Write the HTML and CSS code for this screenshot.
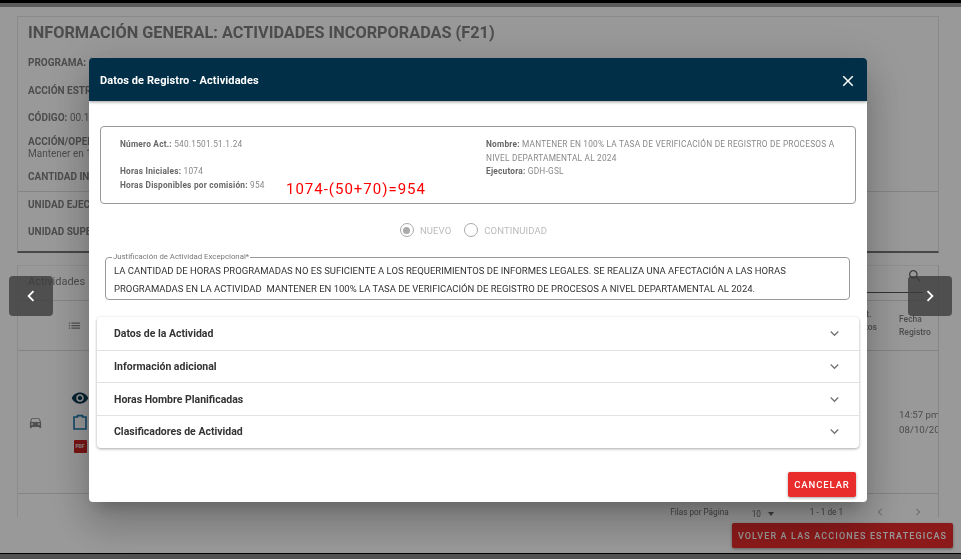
FILE: index.html
```html
<!DOCTYPE html>
<html>
<head>
    <title>Actividades</title>
    <meta charset="UTF-8">
    <meta name="viewport" content="width=device-width, initial-scale=1.0">
    <link rel="stylesheet" href="styles.css">
</head>
<body>
    <div class="barra-top"></div>

    <main class="contenido">
        <section class="card-info">
            <h1>INFORMACIÓN GENERAL: ACTIVIDADES INCORPORADAS (F21)</h1>
            <div class="info-campos">
                <p>PROGRAMA: (</p>
                <p>ACCIÓN ESTRATÉGICA:</p>
                <p>CÓDIGO: <span>00.15</span></p>
            </div>
            <p class="info-accion">ACCIÓN/OPERACIÓN:<span>Mantener en 100%</span></p>
            <p class="info-cantidad">CANTIDAD INICIAL:</p>
            <div class="info-unidades">
                <p>UNIDAD EJECUTORA:</p>
                <p>UNIDAD SUPERIOR:</p>
            </div>
        </section>

        <section class="card-tabla">
            <div class="tabla-top">
                <span>Actividades</span>
                <div class="buscador">
                    <svg viewBox="0 0 24 24" class="ico-buscar"><path d="M15.5 14h-.79l-.28-.27A6.47 6.47 0 0 0 16 9.5 6.5 6.5 0 1 0 9.5 16c1.61 0 3.09-.59 4.23-1.57l.27.28v.79l5 4.99L20.49 19l-4.99-5zm-6 0C7.01 14 5 11.99 5 9.5S7.01 5 9.5 5 14 7.01 14 9.5 11.99 14 9.5 14z"/></svg>
                </div>
            </div>
            <div class="tabla-head">
                <svg viewBox="0 0 24 24" class="ico-lista"><path d="M3 13h2v-2H3v2zm0 4h2v-2H3v2zm0-8h2V7H3v2zm4 4h14v-2H7v2zm0 4h14v-2H7v2zM7 7v2h14V7H7z"/></svg>
                <span class="col-min">Cant.<br>Minutos</span>
                <span class="col-fecha">Fecha<br>Registro</span>
            </div>
            <div class="tabla-fila">
                <svg viewBox="0 0 24 24" class="ico-auto"><path d="M18.92 6.01C18.72 5.42 18.16 5 17.5 5h-11c-.66 0-1.21.42-1.42 1.01L3 12v8c0 .55.45 1 1 1h1c.55 0 1-.45 1-1v-1h12v1c0 .55.45 1 1 1h1c.55 0 1-.45 1-1v-8l-2.08-5.99zM6.5 16c-.83 0-1.5-.67-1.5-1.5S5.67 13 6.5 13s1.5.67 1.5 1.5S7.33 16 6.5 16zm11 0c-.83 0-1.5-.67-1.5-1.5s.67-1.5 1.5-1.5 1.5.67 1.5 1.5-.67 1.5-1.5 1.5zM5 11l1.5-4.5h11L19 11H5z"/></svg>
                <div class="acciones">
                    <svg viewBox="0 0 24 24" class="ico-ojo"><path d="M12 4.5C7 4.5 2.73 7.61 1 12c1.73 4.39 6 7.5 11 7.5s9.27-3.11 11-7.5c-1.73-4.39-6-7.5-11-7.5zM12 17c-2.76 0-5-2.24-5-5s2.24-5 5-5 5 2.24 5 5-2.24 5-5 5zm0-8c-1.66 0-3 1.34-3 3s1.34 3 3 3 3-1.34 3-3-1.34-3-3-3z"/></svg>
                    <svg viewBox="0 0 14 16" class="ico-clip"><path d="M1 3h3.5V1.6h5V3H13v12H1z"/></svg>
                    <span class="ico-pdf">PDF</span>
                </div>
                <span class="col-fecha fecha-dato">14:57 pm<br>08/10/20</span>
            </div>
            <div class="tabla-pie">
                <span>Filas por Página</span>
                <span class="pie-filas">10<i class="flecha-abajo"></i></span>
                <span class="pie-rango">1 - 1 de 1</span>
                <svg viewBox="0 0 24 24" class="ico-pag"><path d="M15.4 7.4 14 6l-6 6 6 6 1.4-1.4L10.8 12z"/></svg>
                <svg viewBox="0 0 24 24" class="ico-pag"><path d="M8.6 7.4 10 6l6 6-6 6-1.4-1.4 4.6-4.6z"/></svg>
            </div>
        </section>

        <div class="volver-fila">
            <button class="btn-volver">VOLVER A LAS ACCIONES ESTRATEGICAS</button>
        </div>
    </main>

    <div class="barra-bottom"></div>

    <!-- Ventana modal -->
    <div class="fondo-modal">
        <div class="modal">
            <header class="modal-head">
                <h2>Datos de Registro - Actividades</h2>
                <svg viewBox="0 0 24 24" class="ico-cerrar"><path d="M19 6.41 17.59 5 12 10.59 6.41 5 5 6.41 10.59 12 5 17.59 6.41 19 12 13.41 17.59 19 19 17.59 13.41 12z"/></svg>
            </header>

            <div class="modal-body">
                <div class="resumen">
                    <div class="resumen-col">
                        <p><b>Número Act.:</b> 540.1501.51.1.24</p>
                        <p>&nbsp;</p>
                        <p><b>Horas Iniciales:</b> 1074</p>
                        <p><b>Horas Disponibles por comisión:</b> 954</p>
                    </div>
                    <div class="resumen-col">
                        <p><b>Nombre:</b> MANTENER EN 100% LA TASA DE VERIFICACIÓN DE REGISTRO DE PROCESOS A NIVEL DEPARTAMENTAL AL 2024</p>
                        <p><b>Ejecutora:</b> GDH-GSL</p>
                    </div>
                    <span class="nota-roja">1074-(50+70)=954</span>
                </div>

                <div class="radios">
                    <span class="radio radio-activo"></span><span>NUEVO</span>
                    <span class="radio"></span><span>CONTINUIDAD</span>
                </div>

                <fieldset class="justificacion">
                    <legend>Justificación de Actividad Excepcional*</legend>
                    <p>LA CANTIDAD DE HORAS PROGRAMADAS NO ES SUFICIENTE A LOS REQUERIMIENTOS DE INFORMES LEGALES. SE REALIZA UNA AFECTACIÓN A LAS HORAS PROGRAMADAS EN LA ACTIVIDAD&nbsp; MANTENER EN 100% LA TASA DE VERIFICACIÓN DE REGISTRO DE PROCESOS A NIVEL DEPARTAMENTAL AL 2024.</p>
                </fieldset>

                <div class="acordeon">
                    <div class="acordeon-item">
                        <span>Datos de la Actividad</span>
                        <svg viewBox="0 0 24 24" class="ico-expandir"><path d="M16.59 8.59 12 13.17 7.41 8.59 6 10l6 6 6-6z"/></svg>
                    </div>
                    <div class="acordeon-item">
                        <span>Información adicional</span>
                        <svg viewBox="0 0 24 24" class="ico-expandir"><path d="M16.59 8.59 12 13.17 7.41 8.59 6 10l6 6 6-6z"/></svg>
                    </div>
                    <div class="acordeon-item">
                        <span>Horas Hombre Planificadas</span>
                        <svg viewBox="0 0 24 24" class="ico-expandir"><path d="M16.59 8.59 12 13.17 7.41 8.59 6 10l6 6 6-6z"/></svg>
                    </div>
                    <div class="acordeon-item">
                        <span>Clasificadores de Actividad</span>
                        <svg viewBox="0 0 24 24" class="ico-expandir"><path d="M16.59 8.59 12 13.17 7.41 8.59 6 10l6 6 6-6z"/></svg>
                    </div>
                </div>

                <div class="modal-pie">
                    <button class="btn-cancelar">CANCELAR</button>
                </div>
            </div>
        </div>
    </div>

    <button class="nav-lateral nav-izq">
        <svg viewBox="0 0 24 24"><path d="M15.41 7.41 14 6l-6 6 6 6 1.41-1.41L10.83 12z"/></svg>
    </button>
    <button class="nav-lateral nav-der">
        <svg viewBox="0 0 24 24"><path d="M8.59 16.59 10 18l6-6-6-6-1.41 1.41L13.17 12z"/></svg>
    </button>
</body>
</html>
```

FILE: styles.css
```css
* {
    box-sizing: border-box;
}

html, body {
    height: 100%;
}

body {
    font-family: Roboto, Arial, sans-serif;
    background-color: #fff;
    color: #333;
    margin: 0;
    overflow: hidden;
    display: flex;
    flex-direction: column;
    filter: blur(0.45px);
}

p {
    margin: 0;
}

svg {
    display: block;
    fill: currentColor;
}

.barra-top {
    height: 7px;
    flex: none;
    background-color: #999;
    border-top: 3px solid #000;
}

.barra-bottom {
    height: 6px;
    flex: none;
    background-color: #888;
    border-top: 1px solid #000;
}

.contenido {
    flex: 1;
    padding: 9px 22px 0 17px;
    display: flex;
    flex-direction: column;
    min-height: 0;
}

/* Tarjeta de informacion general */
.card-info {
    height: 237px;
    flex: none;
    border: 1px solid #e4e4e4;
    border-bottom: 2px solid #777;
    color: #808080;
    font-size: 10px;
    font-weight: 700;
}

.card-info h1 {
    font-size: 16.3px;
    line-height: 20px;
    margin: 6px 0 0 10px;
    color: #808080;
}

.info-campos {
    margin: 14px 0 0 10px;
    display: flex;
    flex-direction: column;
    gap: 15.5px;
    line-height: 12px;
}

.info-campos span, .info-accion span {
    font-weight: 400;
}

.info-accion {
    margin: 12px 0 0 10px;
    line-height: 12px;
}

.info-accion span {
    display: block;
}

.info-cantidad {
    margin: 11px 0 0 10px;
    line-height: 12px;
    padding-bottom: 8px;
    border-bottom: 0;
}

.info-unidades {
    border-top: 1px solid #ddd;
    padding: 7px 0 0 10px;
    display: flex;
    flex-direction: column;
    gap: 15px;
    line-height: 12px;
}

/* Tabla de actividades */
.card-tabla {
    margin-top: 12px;
    height: 252px;
    flex: none;
    border-left: 1px solid #e8e8e8;
    border-right: 1px solid #e0e0e0;
    border-top: 1px solid #eee;
    color: #808080;
    font-size: 11px;
    display: flex;
    flex-direction: column;
}

.tabla-top {
    height: 35px;
    flex: none;
    padding: 9px 0 0 10px;
    display: flex;
    justify-content: space-between;
    align-items: flex-start;
    line-height: 13px;
    border-bottom: 1px solid #ddd;
}

.buscador {
    width: 300px;
    height: 27px;
    border-bottom: 1px solid #555;
    display: flex;
    justify-content: flex-end;
    margin-right: 15px;
    margin-top: -9px;
}

.ico-buscar {
    width: 16px;
    height: 16px;
    color: #666;
    margin-top: 2px;
}

.tabla-head, .tabla-fila {
    position: relative;
    display: flex;
    align-items: center;
    border-bottom: 1px solid #ddd;
    flex: none;
}

.tabla-head {
    height: 50px;
    padding-left: 49px;
    font-size: 8.5px;
    font-weight: 500;
    line-height: 13px;
    align-items: flex-start;
}

.ico-lista {
    width: 15px;
    height: 15px;
    color: #888;
    margin-top: 17px;
}

.col-min {
    margin-left: auto;
    margin-right: 22px;
    margin-top: 7px;
    width: 31px;
    text-align: center;
}

.col-fecha {
    width: 39px;
    margin-top: 12px;
    flex: none;
    white-space: nowrap;
    overflow: hidden;
}

.tabla-fila {
    height: 143px;
    padding-left: 10px;
}

.ico-auto {
    width: 15px;
    height: 15px;
    color: #888;
}

.acciones {
    margin-left: 28px;
    display: flex;
    flex-direction: column;
    align-items: center;
    gap: 5px;
    margin-top: -2px;
}

.ico-ojo {
    width: 18px;
    height: 18px;
    margin-bottom: 2px;
    color: #0d3a52;
}

.ico-clip {
    width: 14px;
    height: 16px;
    fill: none;
    stroke: #1f79b0;
    stroke-width: 1.6px;
}

.ico-pdf {
    width: 13px;
    height: 13px;
    margin-top: 5px;
    background-color: #c22;
    color: #eee;
    font-size: 5px;
    font-weight: 700;
    line-height: 13px;
    text-align: center;
    border-radius: 1px;
}

.fecha-dato {
    margin-left: auto;
    margin-top: 0;
    font-size: 9.7px;
    line-height: 15px;
}

.tabla-pie {
    flex: 1;
    display: flex;
    align-items: center;
    padding-right: 13px;
    font-size: 8.2px;
    justify-content: flex-end;
    padding-top: 10px;
    color: #707070;
}

.pie-filas {
    margin-left: 23px;
    margin-top: 5px;
    display: flex;
    align-items: center;
    gap: 7px;
}

.flecha-abajo {
    width: 0;
    height: 0;
    border-left: 3.5px solid transparent;
    border-right: 3.5px solid transparent;
    border-top: 4px solid #666;
}

.pie-rango {
    margin-left: 36px;
    margin-right: 6px;
}

.ico-pag {
    width: 14px;
    height: 14px;
    color: #bbb;
    margin-left: 24px;
}

.volver-fila {
    display: flex;
    justify-content: flex-end;
    margin-right: -14px;
    padding-top: 6px;
}

.btn-volver {
    width: 221px;
    height: 25px;
    background-color: #e92c2c;
    color: #fff;
    border: none;
    border-radius: 2px;
    font-family: Roboto, Arial, sans-serif;
    font-size: 9px;
    font-weight: 500;
    letter-spacing: 1.13px;
    white-space: nowrap;
    padding: 0;
    box-shadow: 0 1px 3px rgba(0,0,0,0.4);
}

/* Modal */
.fondo-modal {
    position: absolute;
    top: 0;
    left: 0;
    right: 0;
    bottom: 0;
    background-color: rgba(0,0,0,0.4);
    display: flex;
    justify-content: center;
    align-items: flex-start;
    padding: 58px 5px 0 0;
}

.modal {
    width: 778px;
    height: 444px;
    background-color: #fff;
    border-radius: 4px;
    overflow: hidden;
    box-shadow: 0 11px 15px -7px rgba(0,0,0,0.2), 0 24px 38px 3px rgba(0,0,0,0.14), 0 9px 46px 8px rgba(0,0,0,0.12);
}

.modal-head {
    height: 43px;
    background-color: #002f47;
    color: #fff;
    padding: 2px 10px 0 11px;
    display: flex;
    justify-content: space-between;
    align-items: center;
    box-shadow: 0 1px 3px rgba(0,0,0,0.4);
    position: relative;
}

.modal-head h2 {
    font-size: 11px;
    font-weight: 700;
    margin: 0;
    letter-spacing: 0.1px;
}

.ico-cerrar {
    width: 18px;
    height: 18px;
}

.modal-body {
    padding: 25px 11px 0;
}

.resumen {
    position: relative;
    height: 78px;
    border: 1px solid #999;
    border-radius: 4px;
    padding: 11px 18px 0 19px;
    display: grid;
    grid-template-columns: 366px 1fr;
    font-size: 8.3px;
    line-height: 13.7px;
    color: #888;
    letter-spacing: 0.22px;
}

.resumen b {
    color: #666;
    font-weight: 700;
}

.nota-roja {
    position: absolute;
    left: 185px;
    top: 53px;
    font-size: 15px;
    line-height: 18px;
    color: #f00;
    letter-spacing: 1px;
}

.radios {
    height: 26px;
    margin-top: 13px;
    padding-right: 22px;
    display: flex;
    align-items: center;
    justify-content: center;
    font-size: 9.5px;
    color: #bbb;
    letter-spacing: 0.1px;
}

.radio {
    width: 14px;
    height: 14px;
    border: 1.5px solid #aaa;
    border-radius: 50%;
    margin: 0 6px 0 13px;
    display: flex;
    align-items: center;
    justify-content: center;
}

.radio-activo::after {
    content: "";
    width: 7px;
    height: 7px;
    border-radius: 50%;
    background-color: #aaa;
}

.justificacion {
    margin: 10px 6px 0 5px;
    height: 47px;
    border: 1px solid #999;
    border-radius: 4px;
    padding: 0 8px;
    min-width: 0;
}

.justificacion legend {
    font-size: 7.8px;
    line-height: 8px;
    color: #777;
    padding: 0 1px;
    margin-left: -2px;
}

.justificacion p {
    font-size: 9.5px;
    line-height: 18px;
    color: #333;
    margin-top: 1px;
}

.acordeon {
    margin: 17px -3px 0 -3px;
    border-radius: 4px;
    box-shadow: 0 1px 3px rgba(0,0,0,0.35);
}

.acordeon-item {
    height: 32.7px;
    padding: 0 16px 0 17px;
    display: flex;
    justify-content: space-between;
    align-items: center;
    font-size: 10.5px;
    font-weight: 700;
    color: #333;
    border-top: 1px solid #e2e2e2;
}

.acordeon-item:first-child {
    border-top: none;
}

.ico-expandir {
    width: 17px;
    height: 17px;
    color: #777;
}

.modal-pie {
    display: flex;
    justify-content: flex-end;
    padding-top: 24px;
}

.btn-cancelar {
    width: 68px;
    height: 25px;
    background-color: #e92c2c;
    color: #fff;
    border: none;
    border-radius: 2px;
    font-family: Roboto, Arial, sans-serif;
    font-size: 9.5px;
    font-weight: 500;
    letter-spacing: 0.9px;
    padding: 0;
    box-shadow: 0 1px 3px rgba(0,0,0,0.35);
}

.nav-lateral {
    position: absolute;
    top: 276px;
    width: 44px;
    height: 40px;
    background-color: rgba(60,60,60,0.8);
    border: none;
    border-radius: 4px;
    color: #fff;
    padding: 0;
    display: flex;
    align-items: center;
    justify-content: center;
}

.nav-lateral svg {
    width: 22px;
    height: 22px;
}

.nav-izq {
    left: 9px;
}

.nav-der {
    left: 908px;
}
```
